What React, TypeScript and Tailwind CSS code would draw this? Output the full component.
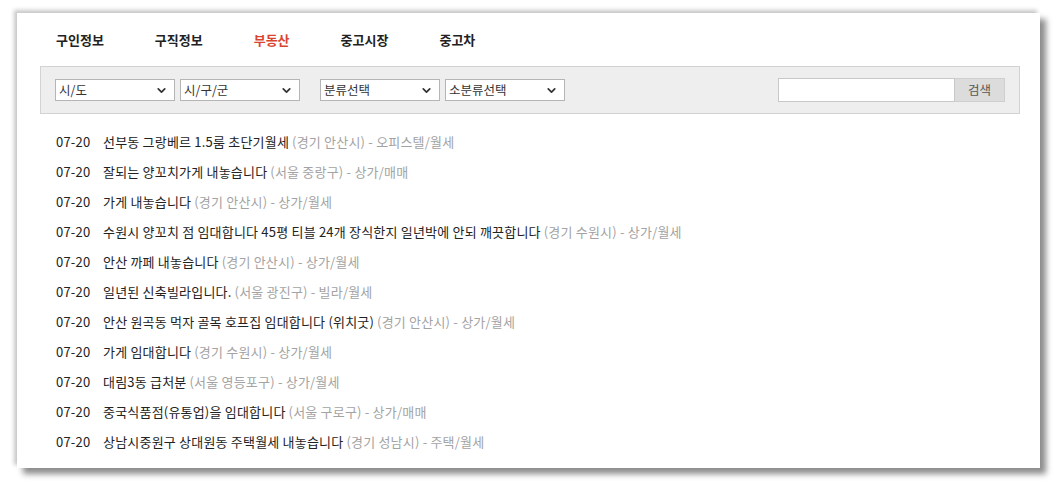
import { ChevronDown } from 'lucide-react';

const tabs = ['구인정보', '구직정보', '부동산', '중고시장', '중고차'];

const posts = [
  { title: '선부동 그랑베르 1.5룸 초단기월세', region: '경기 안산시', kind: '오피스텔/월세' },
  { title: '잘되는 양꼬치가게 내놓습니다', region: '서울 중랑구', kind: '상가/매매' },
  { title: '가게 내놓습니다', region: '경기 안산시', kind: '상가/월세' },
  { title: '수원시 양꼬치 점 임대합니다 45평 티블 24개 장식한지 일년박에 안되 깨끗합니다', region: '경기 수원시', kind: '상가/월세' },
  { title: '안산 까페 내놓습니다', region: '경기 안산시', kind: '상가/월세' },
  { title: '일년된 신축빌라입니다.', region: '서울 광진구', kind: '빌라/월세' },
  { title: '안산 원곡동 먹자 골목 호프집 임대합니다 (위치굿)', region: '경기 안산시', kind: '상가/월세' },
  { title: '가게 임대합니다', region: '경기 수원시', kind: '상가/월세' },
  { title: '대림3동 급처분', region: '서울 영등포구', kind: '상가/월세' },
  { title: '중국식품점(유통업)을 임대합니다', region: '서울 구로구', kind: '상가/매매' },
  { title: '상남시중원구 상대원동 주택월세 내놓습니다', region: '경기 성남시', kind: '주택/월세' },
];

function FakeSelect({ label }: { label: string }) {
  return (
    <div className="flex h-[22px] w-[120px] items-center justify-between border border-[#b5b5b5] bg-white pl-[3px] pr-[6px] text-[12.5px] text-[#333]">
      <span>{label}</span>
      <ChevronDown size={13} strokeWidth={3.2} className="text-[#333]" />
    </div>
  );
}

export default function App() {
  return (
    <div
      className="h-[483px] w-[1057px] bg-white pl-[17px] pt-[13px]"
      style={{ fontFamily: '"Noto Sans CJK KR", "Noto Sans", sans-serif' }}
    >
      <div className="h-[455px] w-[1023px] bg-white px-[23px] pt-[17px] shadow-[6px_6px_6px_rgba(0,0,0,0.45),-3px_-3px_4px_rgba(0,0,0,0.22)]">
        <nav className="flex h-5 items-center gap-[51px] pl-4 text-[13px] font-bold leading-5 text-[#222]">
          {tabs.map((t) => (
            <span key={t} className={t === '부동산' ? 'text-[#d9442f]' : ''}>
              {t}
            </span>
          ))}
        </nav>

        <div className="mt-4 flex h-[48px] w-[980px] items-center border border-[#d2d2d2] bg-[#eeeeee] px-[14px]">
          <div className="flex gap-[5px]">
            <FakeSelect label="시/도" />
            <FakeSelect label="시/구/군" />
          </div>
          <div className="ml-[20px] flex gap-[5px]">
            <FakeSelect label="분류선택" />
            <FakeSelect label="소분류선택" />
          </div>
          <div className="ml-auto flex h-6">
            <div className="h-6 w-[177px] border border-[#c8c8c8] bg-white" />
            <div className="flex h-6 w-[50px] items-center justify-center border border-l-0 border-[#cfcfcf] bg-[#dcdcdc] text-[12.5px] text-[#555]">
              검색
            </div>
          </div>
        </div>

        <ul className="mt-[13px] pl-4 text-[13px] tracking-[0.2px]">
          {posts.map((p, i) => (
            <li key={i} className="flex h-[30px] items-center">
              <span className="w-[47px] text-[#222]">07-20</span>
              <span className="text-[#222]">{p.title}</span>
              <span className="ml-[3px] text-[#a3a3a3]">
                ({p.region}) - {p.kind}
              </span>
            </li>
          ))}
        </ul>
      </div>
    </div>
  );
}
